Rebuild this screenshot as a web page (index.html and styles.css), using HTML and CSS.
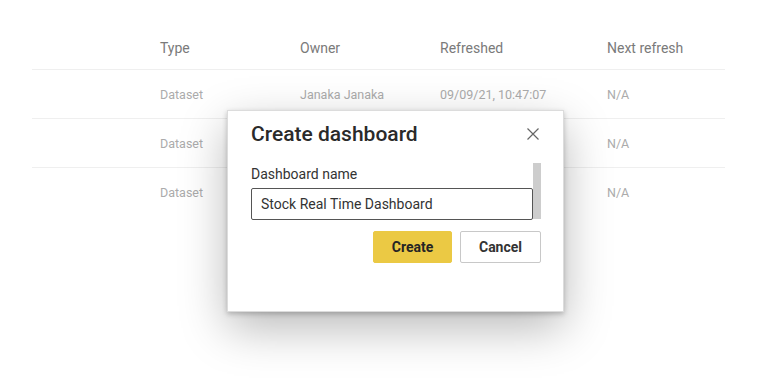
FILE: index.html
```
<!DOCTYPE html>
<html>
<head>
	<title>Create dashboard</title>
	<meta charset="utf-8">
	<meta name="viewport" content="width=device-width, initial-scale=1.0">
	<link rel="stylesheet" href="styles.css">
</head>
<body>
	<div class="list">
		<div class="list-row list-head">
			<div></div>
			<div>Type</div>
			<div>Owner</div>
			<div>Refreshed</div>
			<div>Next refresh</div>
		</div>
		<div class="list-row">
			<div></div>
			<div>Dataset</div>
			<div>Janaka Janaka</div>
			<div>09/09/21, 10:47:07</div>
			<div>N/A</div>
		</div>
		<div class="list-row">
			<div></div>
			<div>Dataset</div>
			<div></div>
			<div></div>
			<div>N/A</div>
		</div>
		<div class="list-row last">
			<div></div>
			<div>Dataset</div>
			<div></div>
			<div></div>
			<div>N/A</div>
		</div>
	</div>

	<div class="dialog">
		<div class="dialog-head">
			<h1 class="dialog-title">Create dashboard</h1>
			<button class="close" aria-label="Close">
				<svg width="12" height="12" viewBox="0 0 12 12">
					<path d="M0.5 0.5 L11.5 11.5 M11.5 0.5 L0.5 11.5" stroke="#666" stroke-width="1.2" fill="none"/>
				</svg>
			</button>
		</div>

		<div class="field-area">
			<div class="field">
				<label class="field-label" for="name">Dashboard name</label>
				<input class="field-input" id="name" type="text" value="Stock Real Time Dashboard">
			</div>
			<div class="scrollbar"></div>
		</div>

		<div class="actions">
			<button class="btn btn-primary">Create</button>
			<button class="btn">Cancel</button>
		</div>
	</div>
</body>
</html>
```

FILE: styles.css
```
*,*::after,*::before{
	box-sizing: border-box;
	margin: 0;
	padding: 0;
}

body{
	width: 767px;
	height: 387px;
	background: #fff;
	font-family: Roboto, "Liberation Sans", sans-serif;
	overflow: hidden;
	position: relative;
}

/* background list */
.list{
	margin: 20px 0 0 32px;
	width: 693px;
}

.list-row{
	display: grid;
	grid-template-columns: 128px 140px 140px 167px 1fr;
	align-items: center;
	height: 49px;
	border-bottom: 1px solid #efefef;
	font-size: 12.5px;
	color: #ababab;
}

.list-row.last{
	border-bottom: none;
}

.list-head{
	height: 50px;
	align-items: end;
	padding-bottom: 11px;
	font-size: 14px;
	line-height: 20px;
	color: #7a7a7a;
}

/* dialog */
.dialog{
	position: absolute;
	left: 227px;
	top: 110px;
	width: 337px;
	height: 202px;
	padding: 9px 22px 0 23px;
	background: #fff;
	border: 1px solid #dcdcdc;
	box-shadow: 0 2px 5px rgba(0, 0, 0, 0.22), 0 16px 44px rgba(0, 0, 0, 0.28);
}

.dialog-head{
	display: flex;
	justify-content: space-between;
	align-items: flex-start;
}

.dialog-title{
	font-size: 21px;
	line-height: 28px;
	font-weight: 500;
	color: #2a2a2a;
}

.close{
	border: none;
	background: none;
	width: 12px;
	height: 12px;
	margin: 8px 2px 0 0;
	display: flex;
}

.field-area{
	display: flex;
	margin-top: 15px;
}

.field{
	flex: 1;
	display: flex;
	flex-direction: column;
}

.field-label{
	font-size: 14px;
	line-height: 20px;
	margin-top: 1px;
	color: #333;
}

.field-input{
	margin-top: 4px;
	height: 32px;
	border: 1px solid #555;
	border-radius: 2px;
	padding: 0 9px;
	font-family: Roboto, "Liberation Sans", sans-serif;
	font-size: 14px;
	color: #333;
	outline: none;
}

.scrollbar{
	width: 8px;
	height: 56px;
	background: #cdcdcd;
}

.actions{
	display: flex;
	justify-content: flex-end;
	gap: 8px;
	margin-top: 11px;
}

.btn{
	height: 32px;
	width: 81px;
	border: 1px solid #c8c8c8;
	border-radius: 2px;
	background: #fff;
	font-family: Roboto, "Liberation Sans", sans-serif;
	font-size: 14px;
	font-weight: 700;
	color: #333;
}

.btn-primary{
	width: 79px;
	background: #ebc944;
	border-color: #ebc944;
	color: #252525;
}
```
